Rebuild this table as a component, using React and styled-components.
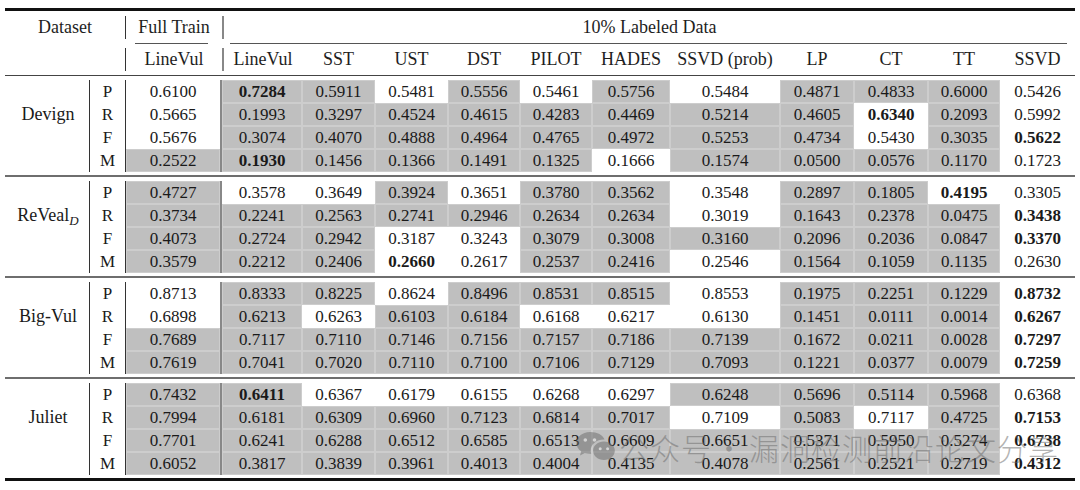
import React from "react";
import styled, { createGlobalStyle } from "styled-components";

const Global = createGlobalStyle`
  html, body { margin: 0; padding: 0; background: #fff; }
  body { font-family: "Liberation Serif", "Times New Roman", serif; color: #1a1a1a; }
`;

const COLS = "85px 35px 97px 80px 73px 73px 72px 72px 78px 110px 74px 74px 72px 75px";

const Page = styled.div`
  padding: 8px 0 0 5px;
  width: 1070px;
`;

const Table = styled.div`
  position: relative;
  width: 1070px;
  border-top: 3px solid #111;
  border-bottom: 3px solid #111;
`;

const HeadGrid = styled.div`
  display: grid;
  grid-template-columns: ${COLS};
  border-bottom: 1px solid #444;
  font-size: 18px;
  color: #1e1e1e;
`;

const HeadCell = styled.div`
  grid-column: ${(p) => p.$col || "auto"};
  margin: ${(p) => (p.$second ? "4px 0 4px" : "5px 0 4px")};
  height: 23px;
  line-height: 23px;
  text-align: center;
  white-space: nowrap;
  border-left: ${(p) =>
    p.$line === "dark" ? "1px solid #333" : p.$line === "gray" ? "2px solid #888" : "none"};
  box-sizing: border-box;
`;

const CmidRule = styled.div`
  grid-column: ${(p) => p.$col};
  height: 1px;
  background: #555;
  margin: ${(p) => p.$margin};
`;

const Group = styled.div`
  display: grid;
  grid-template-columns: ${COLS};
  grid-auto-rows: 23px;
  padding: 4px 0 3px;
  border-top: ${(p) => (p.$first ? "none" : "2px solid #6e6e6e")};
`;

const NameCell = styled.div`
  grid-row: span 4;
  display: flex;
  align-items: center;
  justify-content: center;
  font-size: 18px;
  border-right: 1px solid #333;
  padding: 0 0 23px 2px;
  box-sizing: border-box;
`;

const Sub = styled.span`
  font-style: italic;
  font-size: 13px;
  position: relative;
  top: 5px;
`;

const Letter = styled.div`
  font-size: 17px;
  line-height: 23px;
  text-align: center;
`;

const Value = styled.div`
  font-size: 17px;
  line-height: 23px;
  text-align: center;
  font-weight: ${(p) => (p.$bold ? 700 : 400)};
  background: ${(p) => (p.$gray ? "#bfbfbf" : "transparent")};
  box-shadow: ${(p) => (p.$gray ? "inset 0 0 0 1px rgba(255,255,255,0.22)" : "none")};
  border-left: ${(p) => (p.$ft ? "1px solid #333" : "none")};
  border-right: ${(p) => (p.$ft ? "2px solid #888" : "none")};
  box-sizing: border-box;
  white-space: nowrap;
`;

const Watermark = styled.div`
  position: absolute;
  left: 570px;
  top: 414px;
  display: flex;
  align-items: center;
  gap: 4px;
  pointer-events: none;
  color: rgba(105, 105, 105, 0.5);
  font-family: "Noto Sans CJK SC", "Noto Sans", sans-serif;
  font-size: 30px;
  font-weight: 300;
  letter-spacing: 1px;
  white-space: nowrap;
`;

const Dot = styled.span`
  margin: 0 4px 0 2px;
`;

const groups = [
  {
    name: "Devign",
    rows: [
      "0.6100 #0.7284! #0.5911 0.5481 #0.5556 0.5461 #0.5756 0.5484 #0.4871 #0.4833 #0.6000 0.5426",
      "0.5665 #0.1993 #0.3297 #0.4524 #0.4615 #0.4283 #0.4469 #0.5214 #0.4605 0.6340! #0.2093 0.5992",
      "0.5676 #0.3074 #0.4070 #0.4888 #0.4964 #0.4765 #0.4972 #0.5253 #0.4734 0.5430 #0.3035 0.5622!",
      "#0.2522 #0.1930! #0.1456 #0.1366 #0.1491 #0.1325 0.1666 #0.1574 #0.0500 #0.0576 #0.1170 0.1723",
    ],
  },
  {
    name: "ReVeal",
    sub: "D",
    rows: [
      "#0.4727 0.3578 0.3649 #0.3924 0.3651 #0.3780 #0.3562 0.3548 #0.2897 #0.1805 0.4195! 0.3305",
      "#0.3734 #0.2241 #0.2563 #0.2741 #0.2946 #0.2634 #0.2634 0.3019 #0.1643 #0.2378 #0.0475 0.3438!",
      "#0.4073 #0.2724 #0.2942 0.3187 0.3243 #0.3079 #0.3008 #0.3160 #0.2096 #0.2036 #0.0847 0.3370!",
      "#0.3579 #0.2212 #0.2406 0.2660! 0.2617 #0.2537 #0.2416 0.2546 #0.1564 #0.1059 #0.1135 0.2630",
    ],
  },
  {
    name: "Big-Vul",
    rows: [
      "0.8713 #0.8333 #0.8225 0.8624 #0.8496 #0.8531 #0.8515 0.8553 #0.1975 #0.2251 #0.1229 0.8732!",
      "0.6898 #0.6213 0.6263 #0.6103 #0.6184 0.6168 0.6217 0.6130 #0.1451 #0.0111 #0.0014 0.6267!",
      "#0.7689 #0.7117 #0.7110 #0.7146 #0.7156 #0.7157 #0.7186 #0.7139 #0.1672 #0.0211 #0.0028 0.7297!",
      "#0.7619 #0.7041 #0.7020 #0.7110 #0.7100 #0.7106 #0.7129 #0.7093 #0.1221 #0.0377 #0.0079 0.7259!",
    ],
  },
  {
    name: "Juliet",
    rows: [
      "#0.7432 #0.6411! 0.6367 0.6179 0.6155 0.6268 0.6297 #0.6248 #0.5696 #0.5114 #0.5968 0.6368",
      "#0.7994 #0.6181 #0.6309 #0.6960 #0.7123 #0.6814 #0.7017 0.7109 #0.5083 0.7117 #0.4725 0.7153!",
      "#0.7701 #0.6241 #0.6288 #0.6512 #0.6585 #0.6513 #0.6609 #0.6651 #0.5371 #0.5950 #0.5274 0.6738!",
      "#0.6052 #0.3817 #0.3839 #0.3961 #0.4013 #0.4004 #0.4135 #0.4078 #0.2561 #0.2521 #0.2719 0.4312!",
    ],
  },
];

const letters = ["P", "R", "F", "M"];
const methods = ["SST", "UST", "DST", "PILOT", "HADES", "SSVD (prob)", "LP", "CT", "TT", "SSVD"];

function parse(tok) {
  const gray = tok.startsWith("#");
  const bold = tok.endsWith("!");
  const text = tok.replace("#", "").replace("!", "");
  return { gray, bold, text };
}

function WeChatIcon() {
  return (
    <svg width="40" height="34" viewBox="0 0 40 34" fill="rgba(105,105,105,0.5)">
      <path d="M15 2C7.3 2 1.5 7 1.5 13c0 3.4 1.8 6.3 4.7 8.3L5 25.5l4.8-2.5c1.6.5 3.3.8 5.2.8.4 0 .8 0 1.2-.1-.3-1-.5-2-.5-3.1 0-6.2 5.9-11 13-11h.8C28.1 4.9 22.2 2 15 2z" />
      <circle cx="10.3" cy="10" r="1.8" fill="#fff" fillOpacity="0.6" />
      <circle cx="19.5" cy="10" r="1.8" fill="#fff" fillOpacity="0.6" />
      <path d="M29 11.5c-6 0-10.9 4.1-10.9 9.2s4.9 9.2 10.9 9.2c1.4 0 2.8-.2 4-.7l3.9 2.1-1-3.4c2.4-1.7 3.9-4.3 3.9-7.2 0-5.1-4.8-9.2-10.8-9.2z" />
      <circle cx="25.2" cy="18.8" r="1.5" fill="#fff" fillOpacity="0.6" />
      <circle cx="32.6" cy="18.8" r="1.5" fill="#fff" fillOpacity="0.6" />
    </svg>
  );
}

export default function App() {
  return (
    <>
      <Global />
      <Page>
        <Table>
          <HeadGrid>
            <HeadCell $col="span 2">Dataset</HeadCell>
            <HeadCell $line="dark">Full Train</HeadCell>
            <HeadCell $col="span 11" $line="gray">10% Labeled Data</HeadCell>
            <CmidRule $col="3" $margin="0 14px 0 10px" />
            <CmidRule $col="4 / -1" $margin="0 8px 0 8px" />
            <HeadCell $col="span 2" $second />
            <HeadCell $line="dark" $second>LineVul</HeadCell>
            <HeadCell $line="gray" $second>LineVul</HeadCell>
            {methods.map((m) => (
              <HeadCell key={m} $second>{m}</HeadCell>
            ))}
          </HeadGrid>
          {groups.map((g, gi) => (
            <Group key={g.name} $first={gi === 0}>
              <NameCell>
                {g.name}
                {g.sub && <Sub>{g.sub}</Sub>}
              </NameCell>
              {g.rows.map((row, ri) => (
                <React.Fragment key={ri}>
                  <Letter>{letters[ri]}</Letter>
                  {row.split(" ").map((tok, ci) => {
                    const c = parse(tok);
                    return (
                      <Value key={ci} $gray={c.gray} $bold={c.bold} $ft={ci === 0}>
                        {c.text}
                      </Value>
                    );
                  })}
                </React.Fragment>
              ))}
            </Group>
          ))}
          <Watermark>
            <WeChatIcon />
            <span>
              公众号<Dot>·</Dot>漏洞检测前沿论文分享
            </span>
          </Watermark>
        </Table>
      </Page>
    </>
  );
}
